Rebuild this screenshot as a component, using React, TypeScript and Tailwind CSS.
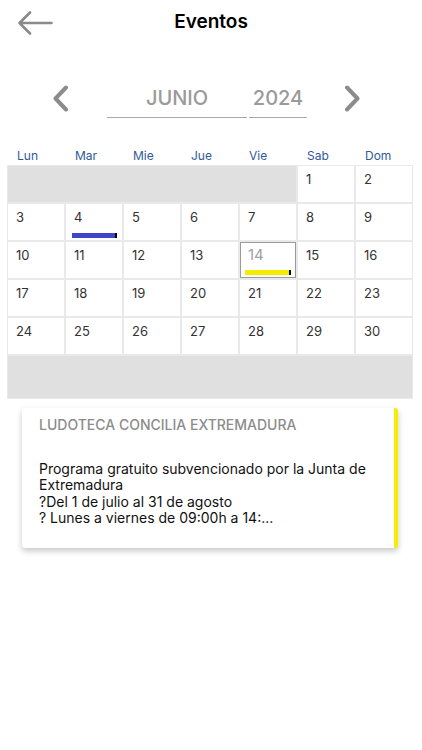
import type { ReactNode } from "react";

const font = { fontFamily: "Inter, 'Noto Sans', sans-serif" };

const dayNames = ["Lun", "Mar", "Mie", "Jue", "Vie", "Sab", "Dom"];

type DayCellProps = {
  day: number;
  bar?: string;
  selected?: boolean;
};

const DayCell = ({ day, bar, selected }: DayCellProps) => {
  return (
    <div
      className={
        selected
          ? "h-[36px] bg-white flex flex-col border border-[#9a9a9a]"
          : "h-[36px] bg-white flex flex-col"
      }
    >
      <span
        className={
          selected
            ? "pl-[7px] pt-[3px] text-[15px] leading-[18px] text-[#a0a0a0]"
            : "pl-[8px] pt-[5px] text-[13px] leading-[16px] text-[#333]"
        }
      >
        {day}
      </span>
      {bar && (
        <div
          className={`mt-auto mb-[2px] h-[5px] border-r-2 border-black ${bar} ${
            selected ? "mx-[4px] h-[4px] mb-[1px]" : "ml-[6px] mr-[5px]"
          }`}
        />
      )}
    </div>
  );
};

const Chevron = ({ dir }: { dir: "left" | "right" }) => (
  <svg width="17" height="27" viewBox="0 0 17 27" fill="none">
    <path
      d={dir === "left" ? "M14 2.5 L3.5 13.5 L14 24.5" : "M3 2.5 L13.5 13.5 L3 24.5"}
      stroke="#8c8c8c"
      strokeWidth="4"
      strokeLinecap="round"
      strokeLinejoin="round"
    />
  </svg>
);

const Field = ({ width, children }: { width: string; children: ReactNode }) => (
  <div
    className={`${width} h-[40px] flex items-center justify-center border-b border-[#a8a8a8] text-[20px] font-medium text-[#9a9a9a]`}
  >
    {children}
  </div>
);

export default function App() {
  const weeks: number[][] = [
    [3, 4, 5, 6, 7, 8, 9],
    [10, 11, 12, 13, 14, 15, 16],
    [17, 18, 19, 20, 21, 22, 23],
    [24, 25, 26, 27, 28, 29, 30],
  ];

  return (
    <div className="w-[422px] h-[750px] bg-white" style={font}>
      {/* header */}
      <div className="relative h-[44px] flex items-center justify-center">
        <svg
          className="absolute left-[17px] top-[11px]"
          width="37"
          height="24"
          viewBox="0 0 37 24"
          fill="none"
        >
          <path
            d="M2.5 12 H34.5 M13 1.5 L2.5 12 L13 22.5"
            stroke="#8a8a8a"
            strokeWidth="2.6"
            strokeLinecap="round"
            strokeLinejoin="round"
          />
        </svg>
        <span className="text-[19px] font-semibold text-black">Eventos</span>
      </div>

      {/* month selector */}
      <div className="mt-[34px] flex items-center pl-[52px]">
        <Chevron dir="left" />
        <div className="ml-[38px] flex gap-[2px]">
          <Field width="w-[140px]">JUNIO</Field>
          <Field width="w-[58px]">2024</Field>
        </div>
        <div className="ml-[37px]">
          <Chevron dir="right" />
        </div>
      </div>

      {/* day names */}
      <div className="mt-[29px] ml-[7px] w-[406px] px-px grid grid-cols-7 gap-[2px]">
        {dayNames.map((d) => (
          <span key={d} className="pl-[9px] h-[18px] text-[12px] leading-[18px] text-[#2f5a9a]">
            {d}
          </span>
        ))}
      </div>

      {/* calendar grid */}
      <div className="ml-[7px] w-[406px] p-px grid grid-cols-7 gap-[2px] bg-[#e9e9e9]">
        <div className="col-span-5 h-[36px] bg-[#e0e0e0]" />
        <DayCell day={1} />
        <DayCell day={2} />
        {weeks.map((week) =>
          week.map((day) => (
            <DayCell
              key={day}
              day={day}
              bar={day === 4 ? "bg-[#3d45c8]" : day === 14 ? "bg-[#f7ec00]" : undefined}
              selected={day === 14}
            />
          ))
        )}
        <div className="col-span-7 h-[42px] bg-[#e0e0e0]" />
      </div>

      {/* event card */}
      <div className="mt-[9px] ml-[22px] w-[376px] h-[140px] bg-white rounded-[3px] border-r-[4px] border-[#f5ee00] shadow-[0_3px_6px_rgba(0,0,0,0.22)] pl-[17px] pt-[8px]">
        <div className="text-[14px] leading-[18px] font-medium text-[#8c8c8c]">
          LUDOTECA CONCILIA EXTREMADURA
        </div>
        <div className="mt-[27px] text-[14px] leading-[16.4px] text-[#111]">
          Programa gratuito subvencionado por la Junta de
          <br />
          Extremadura
          <br />
          ?Del 1 de julio al 31 de agosto
          <br />? Lunes a viernes de 09:00h a 14:...
        </div>
      </div>
    </div>
  );
}
